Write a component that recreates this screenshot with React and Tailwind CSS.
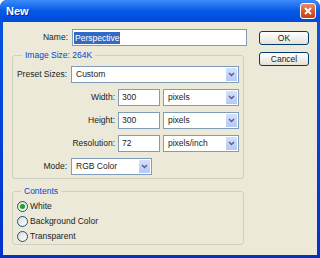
import React from "react";

// little blue drop-down button used by the XP combo boxes
function Arrow() {
  return (
    <div className="w-[13px] h-full bg-linear-to-b from-[#d5e1fc] to-[#b4c9f6] border border-white flex items-center justify-center">
      <svg width="7" height="5" viewBox="0 0 7 5">
        <path d="M1 1 L3.5 3.5 L6 1" stroke="#4d6185" strokeWidth="1.4" fill="none" />
      </svg>
    </div>
  );
}

function Select({ className, value }) {
  return (
    <div className={`h-[17px] flex items-center border border-[#7f9db9] bg-white ${className}`}>
      <span className="flex-1 pl-[4px] leading-[15px]">{value}</span>
      <Arrow />
    </div>
  );
}

function Field({ className, value }) {
  return (
    <div className={`h-[17px] flex items-center border border-[#7f9db9] bg-white pl-[3px] leading-[15px] ${className}`}>
      {value}
    </div>
  );
}

function Radio({ checked, label }) {
  return (
    <div className="h-[15px] flex items-center pl-[4px]">
      <div className="w-[11px] h-[11px] rounded-full border border-[#1c5180] bg-linear-to-br from-[#dcdcd5] to-white flex items-center justify-center">
        {checked && <div className="w-[5px] h-[5px] rounded-full bg-[#21a121]" />}
      </div>
      <span className="ml-[2px]">{label}</span>
    </div>
  );
}

function Button({ children }) {
  return (
    <div className="w-[50px] h-[14px] flex items-center justify-center border border-[#003c74] rounded-[3px] bg-linear-to-b from-white to-[#e6e3d6] text-[#222]">
      {children}
    </div>
  );
}

export default function App() {
  return (
    <div className="w-[320px] h-[258px] bg-white">
      <div className="w-[320px] h-[258px] flex flex-col bg-linear-to-b from-[#0a55e0] to-[#0331c8] rounded-t-[7px] overflow-hidden font-['Liberation_Sans',Arial,sans-serif] text-[8.5px] text-[#222]">
        {/* title bar */}
        <div className="h-[22px] flex items-center pl-[6px] pr-[4px] bg-linear-to-b from-[#3a8cf8] via-[#0558e6] to-[#0349d8]">
          <span className="text-white font-bold text-[11px] [text-shadow:1px_1px_0_#0b2a8a]">New</span>
          <div className="ml-auto w-[16px] h-[16px] rounded-[3px] border border-white bg-linear-to-b from-[#e88b6b] via-[#d85a30] to-[#c4401a] flex items-center justify-center">
            <svg width="8" height="8" viewBox="0 0 8 8">
              <path d="M1 1 L7 7 M7 1 L1 7" stroke="white" strokeWidth="1.8" />
            </svg>
          </div>
        </div>

        {/* body */}
        <div className="flex-1 mx-[3px] mb-[3px] bg-[#ece9d8] flex">
          <div className="w-[244px] pl-[9px] pt-[7px] flex flex-col">
            {/* name */}
            <div className="h-[17px] flex items-center">
              <span className="w-[56px] text-right">Name:</span>
              <div className="ml-[4px] w-[175px] h-[17px] flex items-center border border-[#7f9db9] bg-white pl-[1px]">
                <span className="bg-[#316ac5] text-white px-[1px] leading-[12px]">Perspective</span>
              </div>
            </div>

            {/* image size */}
            <fieldset className="mt-[3px] w-[232px] border border-[#d0d0bf] rounded-[3px]">
              <legend className="ml-[9px] px-[3px] leading-[12px] text-[#0046d5]">Image Size: 264K</legend>
              <div className="pt-[5px] pb-[3px] flex flex-col gap-[6px]">
                <div className="flex items-center">
                  <span className="w-[54px] text-right">Preset Sizes:</span>
                  <Select className="ml-[4px] w-[168px]" value="Custom" />
                </div>
                <div className="flex items-center">
                  <span className="w-[102px] text-right">Width:</span>
                  <Field className="ml-[3px] w-[42px]" value="300" />
                  <Select className="ml-[3px] w-[76px]" value="pixels" />
                </div>
                <div className="flex items-center">
                  <span className="w-[102px] text-right">Height:</span>
                  <Field className="ml-[3px] w-[42px]" value="300" />
                  <Select className="ml-[3px] w-[76px]" value="pixels" />
                </div>
                <div className="flex items-center">
                  <span className="w-[102px] text-right">Resolution:</span>
                  <Field className="ml-[3px] w-[42px]" value="72" />
                  <Select className="ml-[3px] w-[76px]" value="pixels/inch" />
                </div>
                <div className="flex items-center">
                  <span className="w-[54px] text-right">Mode:</span>
                  <Select className="ml-[4px] w-[81px]" value="RGB Color" />
                </div>
              </div>
            </fieldset>

            {/* contents */}
            <fieldset className="mt-[6px] w-[232px] border border-[#d0d0bf] rounded-[3px]">
              <legend className="ml-[8px] px-[3px] leading-[12px] text-[#0046d5]">Contents</legend>
              <div className="pt-[2px] flex flex-col">
                <Radio checked label="White" />
                <Radio label="Background Color" />
                <Radio label="Transparent" />
              </div>
            </fieldset>
          </div>

          {/* buttons */}
          <div className="ml-[12px] pt-[9px] flex flex-col gap-[7px]">
            <Button>OK</Button>
            <Button>Cancel</Button>
          </div>
        </div>
      </div>
    </div>
  );
}
